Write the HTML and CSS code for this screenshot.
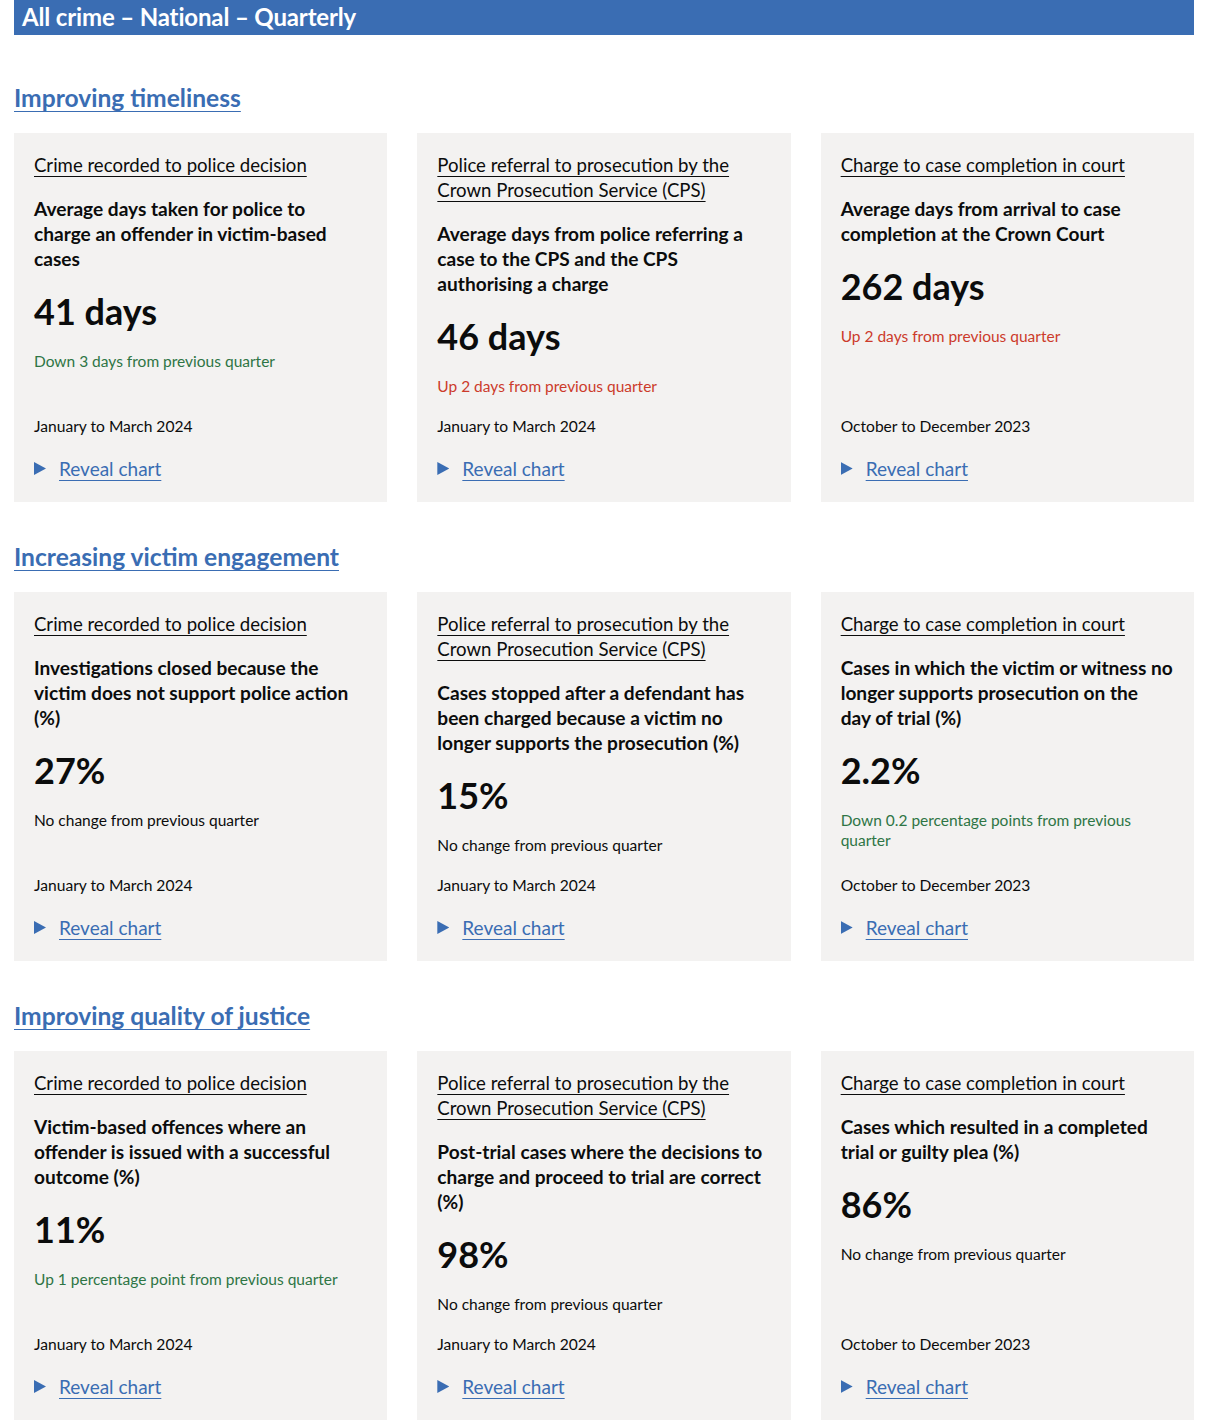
FILE: index.html
```html
<!DOCTYPE html>
<html lang="en">
<head>
<meta charset="utf-8">
<title>All crime – National – Quarterly</title>
<link rel="stylesheet" href="styles.css">
</head>
<body>
<div class="page">
  <h1 class="banner">All crime – National – Quarterly</h1>

  <section class="section first">
    <h2 class="section-title"><a href="#">Improving timeliness</a></h2>
    <div class="grid">
      <div class="card">
        <a class="stage" href="#">Crime recorded to police decision</a>
        <p class="measure">Average days taken for police to charge&nbsp;an offender in victim-based cases</p>
        <p class="figure">41 days</p>
        <p class="change good">Down 3 days from previous quarter</p>
        <p class="period">January to March 2024</p>
        <div class="reveal"><span class="tri"></span><a href="#">Reveal chart</a></div>
      </div>
      <div class="card">
        <a class="stage" href="#">Police referral to prosecution by the Crown Prosecution Service (CPS)</a>
        <p class="measure">Average days from police referring a case to the CPS and the CPS authorising a charge</p>
        <p class="figure">46 days</p>
        <p class="change bad">Up 2 days from previous quarter</p>
        <p class="period">January to March 2024</p>
        <div class="reveal"><span class="tri"></span><a href="#">Reveal chart</a></div>
      </div>
      <div class="card">
        <a class="stage" href="#">Charge to case completion in court</a>
        <p class="measure">Average days from arrival to case completion at the Crown Court</p>
        <p class="figure">262 days</p>
        <p class="change bad">Up 2 days from previous quarter</p>
        <p class="period">October to December 2023</p>
        <div class="reveal"><span class="tri"></span><a href="#">Reveal chart</a></div>
      </div>
    </div>
  </section>

  <section class="section">
    <h2 class="section-title"><a href="#">Increasing victim engagement</a></h2>
    <div class="grid">
      <div class="card">
        <a class="stage" href="#">Crime recorded to police decision</a>
        <p class="measure">Investigations closed because the victim does not support police action (%)</p>
        <p class="figure">27%</p>
        <p class="change">No change from previous quarter</p>
        <p class="period">January to March 2024</p>
        <div class="reveal"><span class="tri"></span><a href="#">Reveal chart</a></div>
      </div>
      <div class="card">
        <a class="stage" href="#">Police referral to prosecution by the Crown Prosecution Service (CPS)</a>
        <p class="measure">Cases stopped after a defendant has been charged because a victim no longer supports the prosecution (%)</p>
        <p class="figure">15%</p>
        <p class="change">No change from previous quarter</p>
        <p class="period">January to March 2024</p>
        <div class="reveal"><span class="tri"></span><a href="#">Reveal chart</a></div>
      </div>
      <div class="card">
        <a class="stage" href="#">Charge to case completion in court</a>
        <p class="measure">Cases in which the victim or witness no longer supports prosecution on the day&nbsp;of trial (%)</p>
        <p class="figure">2.2%</p>
        <p class="change good">Down 0.2 percentage points from previous quarter</p>
        <p class="period">October to December 2023</p>
        <div class="reveal"><span class="tri"></span><a href="#">Reveal chart</a></div>
      </div>
    </div>
  </section>

  <section class="section">
    <h2 class="section-title"><a href="#">Improving quality of justice</a></h2>
    <div class="grid">
      <div class="card">
        <a class="stage" href="#">Crime recorded to police decision</a>
        <p class="measure">Victim-based offences where an offender is issued with a successful outcome (%)</p>
        <p class="figure">11%</p>
        <p class="change good">Up 1 percentage point from previous quarter</p>
        <p class="period">January to March 2024</p>
        <div class="reveal"><span class="tri"></span><a href="#">Reveal chart</a></div>
      </div>
      <div class="card">
        <a class="stage" href="#">Police referral to prosecution by the Crown Prosecution Service (CPS)</a>
        <p class="measure">Post-trial cases where the decisions to charge and proceed to trial are correct (%)</p>
        <p class="figure">98%</p>
        <p class="change">No change from previous quarter</p>
        <p class="period">January to March 2024</p>
        <div class="reveal"><span class="tri"></span><a href="#">Reveal chart</a></div>
      </div>
      <div class="card">
        <a class="stage" href="#">Charge to case completion in court</a>
        <p class="measure">Cases which resulted in a completed trial or guilty plea (%)</p>
        <p class="figure">86%</p>
        <p class="change">No change from previous quarter</p>
        <p class="period">October to December 2023</p>
        <div class="reveal"><span class="tri"></span><a href="#">Reveal chart</a></div>
      </div>
    </div>
  </section>
</div>
</body>
</html>
```

FILE: styles.css
```css
* { box-sizing: border-box; }

body {
  margin: 0;
  background: #ffffff;
  color: #0b0c0c;
  font-family: Lato, "Liberation Sans", Arial, sans-serif;
}

.page {
  margin: 0 22px 0 14px;
}

.banner {
  margin: 0;
  height: 35px;
  padding: 0 8px;
  background: #3a6db3;
  color: #ffffff;
  font-size: 24px;
  line-height: 34px;
  font-weight: 700;
  letter-spacing: -0.15px;
}

.section {
  padding-top: 40px;
}

.section.first {
  padding-top: 48px;
}

.section-title {
  margin: 0 0 20px;
  font-size: 24.6px;
  line-height: 30px;
  font-weight: 700;
}

.section-title a {
  color: #3a6db3;
  text-decoration: underline;
  text-decoration-thickness: 1px;
  text-underline-offset: 4px;
}

.grid {
  display: grid;
  grid-template-columns: repeat(3, 1fr);
  column-gap: 30px;
}

.card {
  display: flex;
  flex-direction: column;
  align-items: flex-start;
  background: #f3f2f1;
  padding: 20px 20px 21px;
}

.stage {
  color: #0b0c0c;
  font-size: 18.6px;
  line-height: 25px;
  text-decoration: underline;
  text-decoration-thickness: 1px;
  text-underline-offset: 4px;
  margin-bottom: 18px;
}

.measure {
  margin: 0 0 20px;
  font-size: 19.1px;
  line-height: 25px;
  font-weight: 700;
}

.figure {
  margin: 0 0 20px;
  font-size: 36px;
  line-height: 40px;
  font-weight: 700;
}

.change {
  margin: 0 0 20px;
  font-size: 15.5px;
  line-height: 20px;
  color: #0b0c0c;
}

.change.good { color: #2e7545; }
.change.bad { color: #cc3b2b; }

.period {
  margin: auto 0 20px;
  font-size: 15.6px;
  line-height: 20px;
}

.reveal {
  display: flex;
  align-items: center;
  font-size: 19px;
  line-height: 25px;
}

.tri {
  width: 12px;
  height: 13px;
  margin-right: 13px;
  background: #3a6db3;
  clip-path: polygon(0 0, 100% 50%, 0 100%);
}

.reveal a {
  color: #3a6db3;
  text-decoration: underline;
  text-decoration-thickness: 1px;
  text-underline-offset: 4px;
}
```
